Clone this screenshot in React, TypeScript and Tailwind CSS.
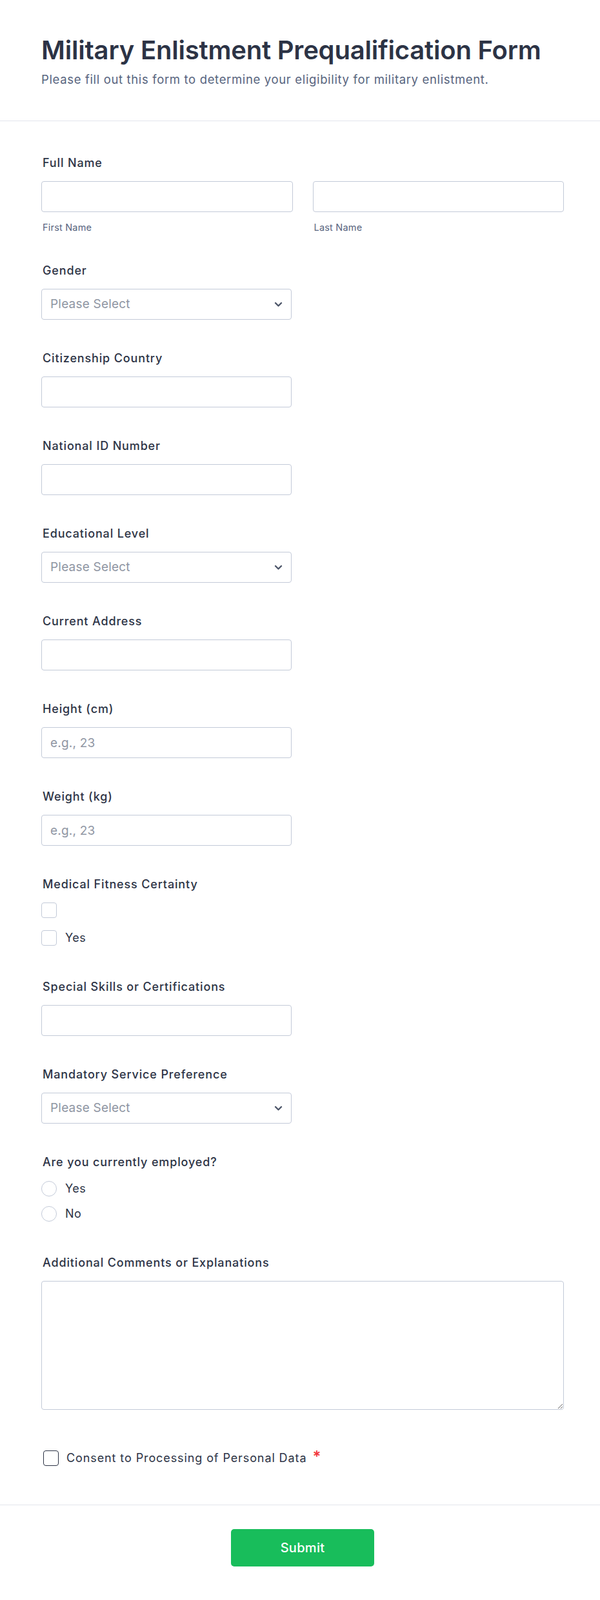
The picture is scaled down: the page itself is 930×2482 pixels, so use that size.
import React from "react";

const labelCls = "block pl-[2px] pt-[2px] text-[18px] leading-[24px] font-medium tracking-[0.85px] text-[#2c3345]";
const inputCls =
  "block h-[48px] rounded-[4px] border border-[#c3cad8] bg-white px-[13px] text-[19px] tracking-[0.2px] text-[#2c3345] placeholder:text-[#8f96a3] outline-none";

function Chevron() {
  return (
    <svg width="13" height="9" viewBox="0 0 13 9" fill="none" className="shrink-0">
      <path d="M2 2L6.5 6.5L11 2" stroke="#4d5669" strokeWidth="2.4" strokeLinecap="round" strokeLinejoin="round" />
    </svg>
  );
}

function SelectBox() {
  return (
    <div className="flex h-[48px] w-[388px] items-center justify-between rounded-[4px] border border-[#c3cad8] bg-white pl-[13px] pr-[13px]">
      <span className="text-[19px] tracking-[0.2px] text-[#8f96a3]">Please Select</span>
      <Chevron />
    </div>
  );
}

function Field({
  label,
  mb = "mb-[46px]",
  children,
}: {
  label: string;
  mb?: string;
  children: React.ReactNode;
}) {
  return (
    <div className={mb}>
      <label className={labelCls + " mb-[16px]"}>{label}</label>
      {children}
    </div>
  );
}

const optionText = "text-[18px] leading-[24px] tracking-[0.5px] text-[#2c3345]";

export default function App() {
  return (
    <div className="min-h-[2482px] bg-white font-['Inter','Noto_Sans',sans-serif]">
      <header className="border-b border-[#e3e5ec] pl-[64px] pr-[56px] pt-[54px] pb-[52px]">
        <h1 className="text-[40px] font-semibold leading-[48px] tracking-[-0.2px] text-[#2c3345]">
          Military Enlistment Prequalification Form
        </h1>
        <p className="mt-[9px] text-[18.5px] leading-[24px] tracking-[0.65px] text-[#57647e]">
          Please fill out this form to determine your eligibility for military enlistment.
        </p>
      </header>

      <section className="border-b border-[#e3e5ec] pl-[64px] pr-[56px] pt-[51px] pb-[60px]">
        <div className="mb-[44px]">
          <label className={labelCls + " mb-[16px]"}>Full Name</label>
          <div className="grid grid-cols-2 gap-x-[31px]">
            <div>
              <input className={inputCls + " w-full"} />
              <div className="mt-[15px] pl-[2px] text-[14.5px] leading-[18px] tracking-[0.2px] text-[#57647e]">First Name</div>
            </div>
            <div>
              <input className={inputCls + " w-full"} />
              <div className="mt-[15px] pl-[2px] text-[14.5px] leading-[18px] tracking-[0.2px] text-[#57647e]">Last Name</div>
            </div>
          </div>
        </div>

        <Field label="Gender">
          <SelectBox />
        </Field>
        <Field label="Citizenship Country">
          <input className={inputCls + " w-[388px]"} />
        </Field>
        <Field label="National ID Number">
          <input className={inputCls + " w-[388px]"} />
        </Field>
        <Field label="Educational Level">
          <SelectBox />
        </Field>
        <Field label="Current Address">
          <input className={inputCls + " w-[388px]"} />
        </Field>
        <Field label="Height (cm)">
          <input className={inputCls + " w-[388px]"} placeholder="e.g., 23" />
        </Field>
        <Field label="Weight (kg)">
          <input className={inputCls + " w-[388px]"} placeholder="e.g., 23" />
        </Field>

        <Field label="Medical Fitness Certainty" mb="mb-[50px]">
          <div className="flex flex-col gap-[19px]">
            <div className="flex h-[24px] items-center">
              <span className="block h-[24px] w-[24px] rounded-[4px] border border-[#c3cad8] bg-white" />
            </div>
            <div className="flex h-[24px] items-center gap-[13px]">
              <span className="block h-[24px] w-[24px] rounded-[4px] border border-[#c3cad8] bg-white" />
              <span className={optionText}>Yes</span>
            </div>
          </div>
        </Field>

        <Field label="Special Skills or Certifications">
          <input className={inputCls + " w-[388px]"} />
        </Field>
        <Field label="Mandatory Service Preference">
          <SelectBox />
        </Field>

        <div className="mb-[50px]">
          <label className={labelCls + " mb-[17px]"}>Are you currently employed?</label>
          <div className="flex flex-col gap-[15px]">
            <div className="flex h-[24px] items-center gap-[13px]">
              <span className="block h-[24px] w-[24px] rounded-full border border-[#c3cad8] bg-white" />
              <span className={optionText}>Yes</span>
            </div>
            <div className="flex h-[24px] items-center gap-[13px]">
              <span className="block h-[24px] w-[24px] rounded-full border border-[#c3cad8] bg-white" />
              <span className={optionText}>No</span>
            </div>
          </div>
        </div>

        <div className="mb-[63px]">
          <label className={labelCls + " mb-[16px]"}>Additional Comments or Explanations</label>
          <textarea className="block h-[200px] w-full rounded-[4px] border border-[#c3cad8] bg-white p-[12px] text-[18px] text-[#2c3345] outline-none" />
        </div>

        <div className="flex h-[24px] items-center pl-[3px]">
          <span className="block h-[24px] w-[24px] shrink-0 rounded-[4px] border-[1.5px] border-[#2c3345] bg-white" />
          <span className="ml-[12px] text-[18px] leading-[24px] tracking-[0.9px] text-[#2c3345]">
            Consent to Processing of Personal Data
          </span>
          <span className="ml-[9px] self-start -mt-[2px] text-[24px] leading-[24px] font-semibold text-[#f23a3c]">*</span>
        </div>
      </section>

      <footer className="flex justify-center pl-[64px] pr-[56px] pt-[37px] pb-[51px]">
        <button className="h-[58px] w-[222px] rounded-[5px] bg-[#18bd5b] text-[20px] font-medium tracking-[0.3px] text-white">
          Submit
        </button>
      </footer>
    </div>
  );
}
